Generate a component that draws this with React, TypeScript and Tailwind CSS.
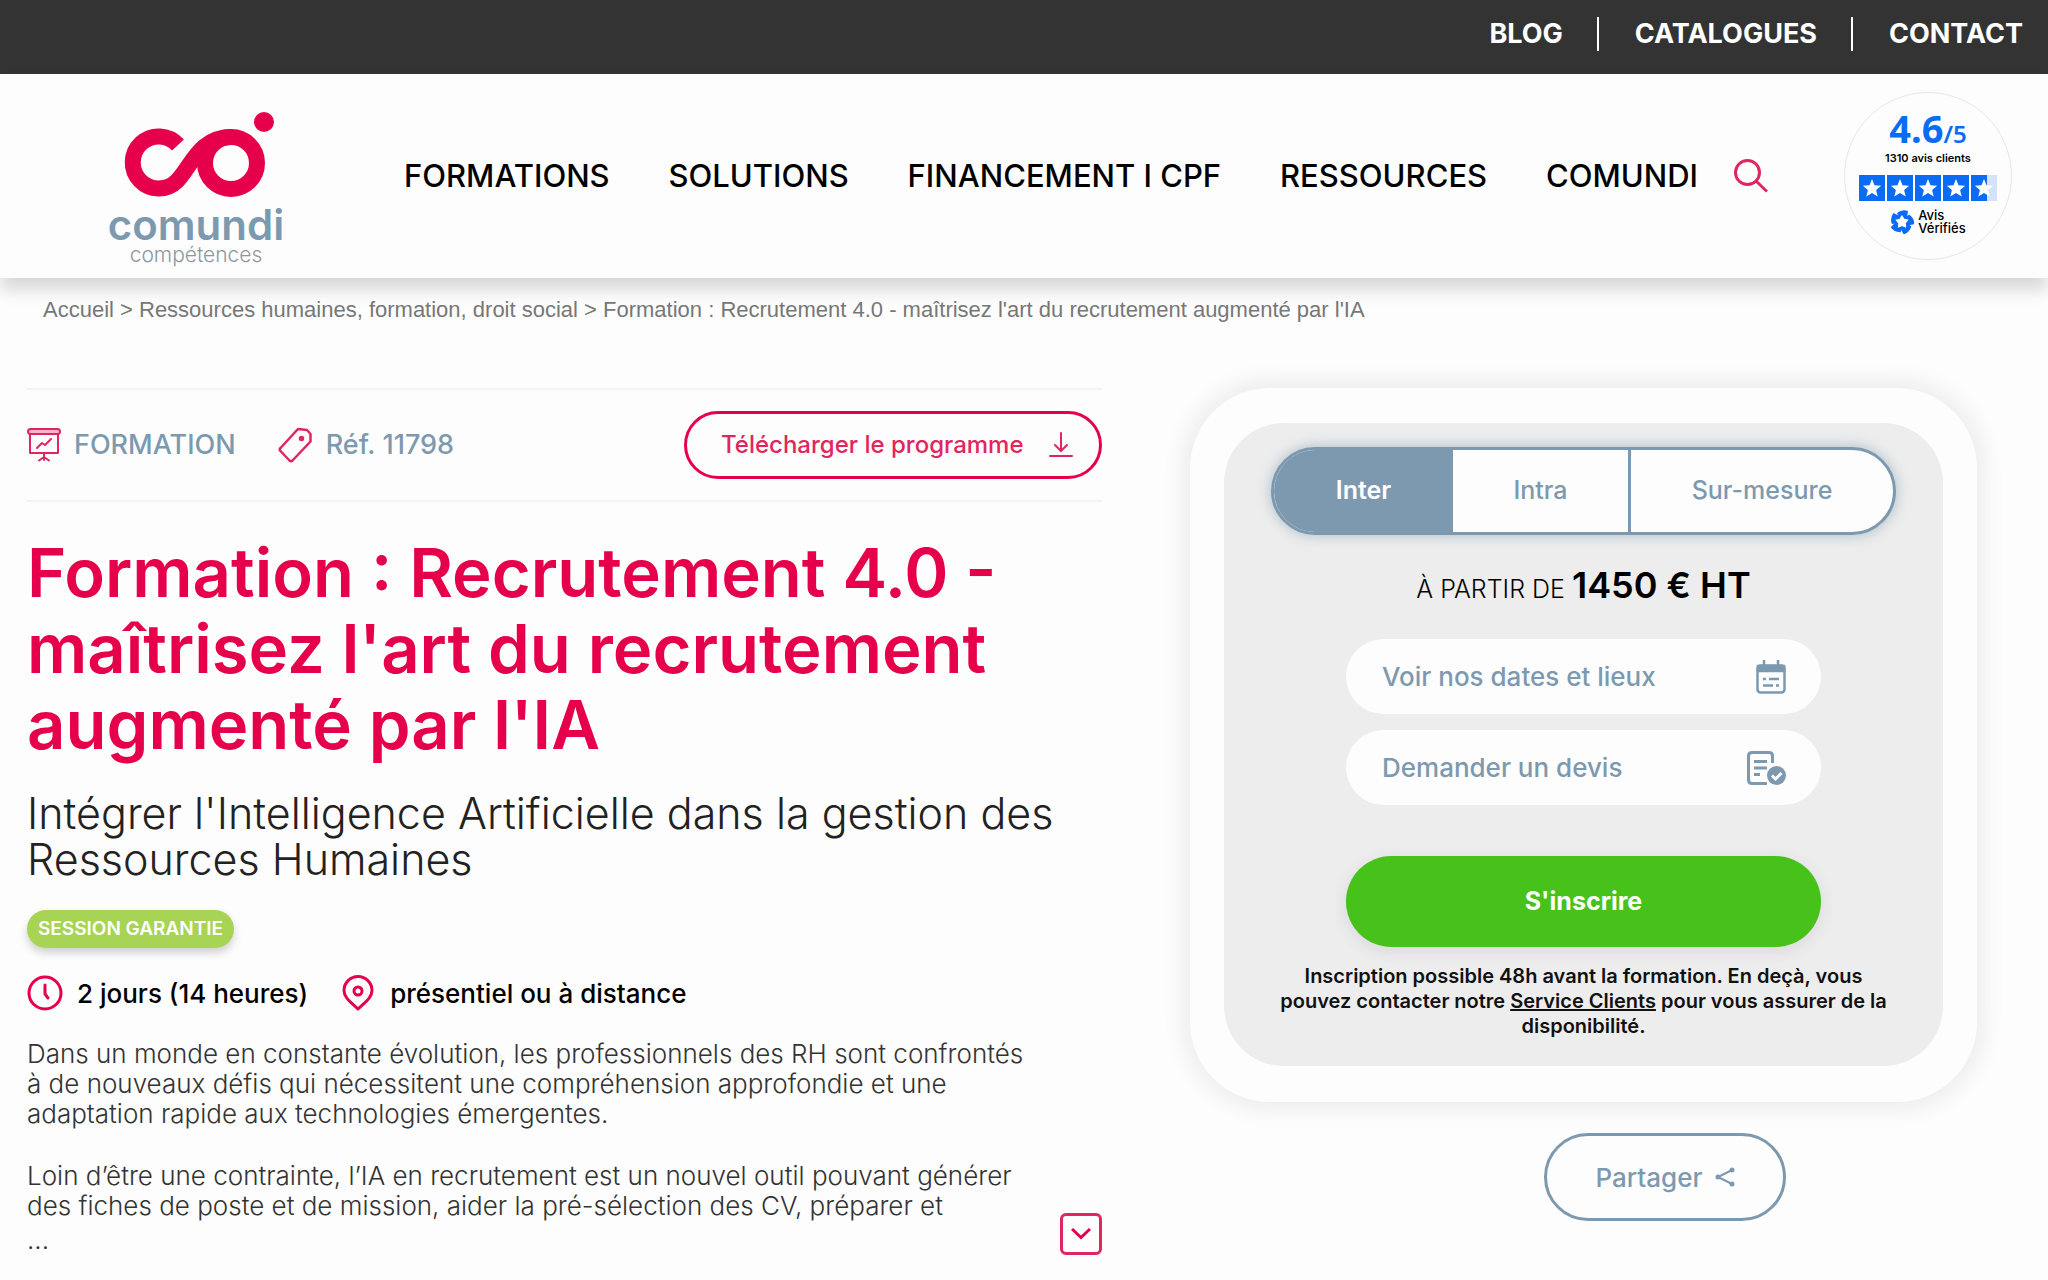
import { useState } from 'react';

const TOP_LINKS = ['BLOG', 'CATALOGUES', 'CONTACT'];
const NAV_LINKS = ['FORMATIONS', 'SOLUTIONS', 'FINANCEMENT I CPF', 'RESSOURCES', 'COMUNDI'];
const MODES = [
  { label: 'Inter', size: 'w-[179px]' },
  { label: 'Intra', size: 'w-[178px] border-r-3 border-[#7d99af]' },
  { label: 'Sur-mesure', size: 'flex-1' },
];

function Logo() {
  return (
    <a href="#" className="flex w-[178px] flex-col items-center pt-4">
      <svg width="158" height="102" viewBox="0 0 158 102" fill="none">
        <g stroke="#e6004c" strokeWidth="16">
          <path d="M61 42A26 26 0 1 0 60 78C74 64 82 34 114 34" />
          <circle cx="114" cy="60" r="26" />
        </g>
        <circle cx="147" cy="19" r="10" fill="#e6004c" />
      </svg>
      <span className="text-[42px] leading-[40px] font-semibold text-[#7d99af]">comundi</span>
      <span className="text-[21px] leading-[20px] font-light text-[#8d979f]">compétences</span>
    </a>
  );
}

function SearchIcon() {
  return (
    <svg width="34" height="34" viewBox="0 0 34 34" fill="none" stroke="#e0265f" strokeWidth="3">
      <circle cx="13.5" cy="13.5" r="12" />
      <path d="M22 22l11 10.5" />
    </svg>
  );
}

function Stars() {
  const star = 'M13 4l2.5 6.2 6.7.5-5.1 4.3 1.6 6.5-5.7-3.5-5.7 3.5 1.6-6.5L3.8 10.7l6.7-.5z';
  return (
    <svg width="138" height="26" viewBox="0 0 138 26">
      {[0, 28, 56, 84, 112].map((x) => (
        <g key={x} transform={`translate(${x} 0)`}>
          <rect width="26" height="26" fill={x === 112 ? '#d3e2fd' : '#0a6cf5'} />
          {x === 112 && <rect width="16" height="26" fill="#0a6cf5" />}
          <path d={star} fill="#fff" />
        </g>
      ))}
    </svg>
  );
}

// Five blades turned around an empty star
function VerifiedIcon() {
  return (
    <svg width="24" height="24" viewBox="0 0 24 24" fill="#0a6cf5">
      {[0, 72, 144, 216, 288].map((a) => (
        <path key={a} d="M7 3Q12 -1 18 1L17 8L14.5 9L12 5L9.5 8.5Z" transform={`rotate(${a} 12 12)`} />
      ))}
    </svg>
  );
}

function Rating() {
  return (
    <a href="#" className="flex size-[168px] flex-col items-center rounded-full border border-gray-200 pt-[14px] text-black">
      <span className="font-['Noto_Sans'] text-[38px] leading-[42px] font-bold text-[#0a6cf5]">
        4.6<span className="text-[24px] leading-none font-semibold">/5</span>
      </span>
      <span className="text-[11px] leading-[18px] font-semibold">1310 avis clients</span>
      <span className="mt-2">
        <Stars />
      </span>
      <span className="mt-2 flex items-center gap-1 text-[13px] leading-[13px] font-medium">
        <VerifiedIcon />
        <span>
          Avis
          <br />
          Vérifiés
        </span>
      </span>
    </a>
  );
}

function BoardIcon() {
  return (
    <svg width="34" height="34" viewBox="0 0 34 34" fill="none" stroke="#e0265f" strokeWidth="2" strokeLinecap="round" strokeLinejoin="round">
      <rect x="1" y="1" width="32" height="5" rx="2.5" fill="#f6b5c9" />
      <path d="M3 6v19h28V6M17 25v7M17 29l-5 3.5M17 29l5 3.5M10 20l5-5 3 2 6-6" />
    </svg>
  );
}

function TagIcon() {
  return (
    <svg width="34" height="36" viewBox="0 0 34 36" fill="none" stroke="#e0265f" strokeWidth="2.5" strokeLinejoin="round">
      <path d="M20 2l9 1 3.5 4v7.5L14.5 33.5q-1.5 1.5-3 0L2.5 24q-1.5-1.5 0-3z" />
      <circle cx="23.5" cy="11.5" r="1.5" fill="#e0265f" />
    </svg>
  );
}

function DownloadIcon() {
  return (
    <svg width="24" height="26" viewBox="0 0 24 26" fill="none" stroke="#e0265f" strokeWidth="2" strokeLinecap="round">
      <path d="M12 1v18M6 13l6 6 6-6M1 24h22" />
    </svg>
  );
}

function ClockIcon() {
  return (
    <svg width="36" height="36" viewBox="0 0 36 36" fill="none" stroke="#e6004c" strokeWidth="3" strokeLinecap="round">
      <circle cx="18" cy="18" r="16" />
      <path d="M18 10v9l3 4" />
    </svg>
  );
}

function PinIcon() {
  return (
    <svg width="32" height="36" viewBox="0 0 32 36" fill="none" stroke="#e6004c" strokeWidth="3" strokeLinejoin="round">
      <path d="M16 34C10 28 2 23 2 15.5a14 14 0 0 1 28 0C30 23 22 28 16 34z" />
      <circle cx="16" cy="16" r="4" />
    </svg>
  );
}

function CalendarIcon() {
  return (
    <svg width="30" height="34" viewBox="0 0 30 34" fill="none" stroke="#7d99af" strokeWidth="2.5">
      <rect x="1.5" y="5.5" width="27" height="27" rx="3" />
      <path d="M2 6h26v5H2z" fill="#7d99af" />
      <path d="M8 0v6M22 0v6M7 19h3M13 19h10M7 25.5h10M20 25.5h3" />
    </svg>
  );
}

function QuoteIcon() {
  return (
    <svg width="39" height="34" viewBox="0 0 39 34" fill="none" stroke="#7d99af" strokeWidth="3">
      <path d="M20 32.5H5q-3.5 0-3.5-3.5V5Q1.5 1.5 5 1.5h17q3.500 0 3.500 3.500v7M7 10.500h13M7 17h13M7 23.500h6" />
      <circle cx="29.5" cy="24.5" r="9.5" fill="#7d99af" stroke="none" />
      <path d="M25 24.5l3.5 3.500 6-6" stroke="#fff" />
    </svg>
  );
}

function ShareIcon() {
  return (
    <svg width="20" height="20" viewBox="0 0 20 20" fill="#7d99af" stroke="#7d99af" strokeWidth="2">
      <path d="M17 3L3 10l14 7" fill="none" />
      <circle cx="3" cy="10" r="1.5" />
      <circle cx="17" cy="3" r="1.5" />
      <circle cx="17" cy="17" r="1.5" />
    </svg>
  );
}

function Header() {
  return (
    <header className="relative">
      <div className="flex h-[74px] items-center justify-end bg-[#333] pr-[25px] pb-[7px] text-[27px] leading-[34px] font-bold text-white">
        {TOP_LINKS.map((label, i) => (
          <a key={label} href="#" className={i > 0 ? 'ml-[34px] border-l-2 border-white pl-9' : ''}>
            {label}
          </a>
        ))}
      </div>
      <div className="flex h-[204px] items-center bg-[#fdfdfd] pr-9 pl-[107px] shadow-[0_12px_16px_rgba(0,0,0,0.15)]">
        <Logo />
        <nav className="ml-[119px] flex flex-1 items-center justify-between text-[31px] font-medium text-black">
          {NAV_LINKS.map((label) => (
            <a key={label} href="#">
              {label}
            </a>
          ))}
        </nav>
        <button type="button" aria-label="Rechercher" className="mr-[76px] ml-9">
          <SearchIcon />
        </button>
        <Rating />
      </div>
    </header>
  );
}

function Presentation() {
  return (
    <section>
      <div className="flex h-[114px] items-center border-y-2 border-[#f3f3f3] text-[27px] font-medium text-[#7d99af]">
        <BoardIcon />
        <span className="ml-[13px]">FORMATION</span>
        <span className="mr-[14px] ml-[42px]">
          <TagIcon />
        </span>
        <span>Réf. 11798</span>
        <a href="#" className="ml-auto flex h-[68px] w-[418px] items-center justify-between rounded-full border-3 border-[#e6004c] pr-[26px] pl-[34px] text-[24px] text-[#e0265f]">
          Télécharger le programme
          <DownloadIcon />
        </a>
      </div>
      <h1 className="mt-[33px] text-[67px] leading-[76px] font-semibold text-[#e6004c]">
        Formation : Recrutement 4.0 -<br />
        maîtrisez l'art du recrutement
        <br />
        augmenté par l'IA
      </h1>
      <h2 className="mt-[27px] text-[43px] leading-[46px] font-light text-[#222]">
        Intégrer l'Intelligence Artificielle dans la gestion des
        <br />
        Ressources Humaines
      </h2>
      <p className="mt-7 flex h-[38px] w-[207px] items-center justify-center rounded-full bg-[#a8d455] text-[19px] font-semibold text-white shadow-[0_5px_8px_rgba(0,0,0,0.18)]">
        SESSION GARANTIE
      </p>
      <div className="mt-[27px] flex h-9 items-center text-[26px] font-medium text-black">
        <ClockIcon />
        <span className="mr-[34px] ml-[14px]">2 jours (14 heures)</span>
        <PinIcon />
        <span className="ml-4">présentiel ou à distance</span>
      </div>
      <div className="mt-7 flex items-end justify-between text-[26px] leading-[30px] font-light text-[#333]">
        <div>
          <p>
            Dans un monde en constante évolution, les professionnels des RH sont confrontés
            <br />
            à de nouveaux défis qui nécessitent une compréhension approfondie et une
            <br />
            adaptation rapide aux technologies émergentes.
          </p>
          <p className="mt-8">
            Loin d’être une contrainte, l’IA en recrutement est un nouvel outil pouvant générer
            <br />
            des fiches de poste et de mission, aider la pré-sélection des CV, préparer et
          </p>
          <p className="mt-1">...</p>
        </div>
        <button type="button" aria-label="Lire la suite" className="flex size-[42px] shrink-0 items-center justify-center rounded-md border-3 border-[#e0265f]">
          <svg width="20" height="12" viewBox="0 0 20 12" fill="none" stroke="#e6004c" strokeWidth="3">
            <path d="M1 1l9 8.500L19 1" />
          </svg>
        </button>
      </div>
    </section>
  );
}

function Booking() {
  const [mode, setMode] = useState('Inter');
  const pill = 'flex h-[75px] w-full items-center justify-between rounded-full bg-[#fdfdfd] pr-[35px] pl-9 text-[26px] font-medium text-[#7d99af]';

  return (
    <aside className="flex flex-col items-center">
      <div className="w-full rounded-[80px] bg-[#fdfdfd] px-[34px] pt-[35px] pb-9 shadow-[0_0_20px_10px_rgba(0,0,0,0.06)]">
        <div className="flex flex-col items-center rounded-[60px] bg-[#ededed] px-[47px] pt-6 pb-[27px]">
          <div className="flex h-[88px] w-full overflow-hidden rounded-full border-3 border-[#7d99af] bg-[#fdfdfd] text-[25px] shadow-[0_0_14px_rgba(125,153,175,0.6)]">
            {MODES.map(({ label, size }) => (
              <button
                key={label}
                type="button"
                onClick={() => setMode(label)}
                className={`${size} ${mode === label ? 'bg-[#7d99af] font-semibold text-white' : 'font-medium text-[#7d99af]'}`}
              >
                {label}
              </button>
            ))}
          </div>
          <p className="mt-[26px] text-[25px] leading-[48px] text-black">
            <span className="font-light">À PARTIR DE</span> <strong className="text-[36px] font-semibold">1450 € HT</strong>
          </p>
          <div className="mt-[26px] flex w-full max-w-[475px] flex-col gap-4">
            <button type="button" className={pill}>
              Voir nos dates et lieux
              <CalendarIcon />
            </button>
            <button type="button" className={pill}>
              Demander un devis
              <QuoteIcon />
            </button>
            <button type="button" className="mt-[35px] h-[91px] rounded-full bg-[#47c21a] text-[25px] font-bold text-white shadow-[0_4px_16px_rgba(90,60,120,0.12)]">
              S'inscrire
            </button>
          </div>
          <p className="mt-[17px] text-center text-[20px] leading-[25px] font-semibold text-[#111]">
            Inscription possible 48h avant la formation. En deçà, vous
            <br />
            pouvez contacter notre{' '}
            <a href="#" className="underline">
              Service Clients
            </a>{' '}
            pour vous assurer de la
            <br />
            disponibilité.
          </p>
        </div>
      </div>
      <button type="button" className="mt-[31px] ml-[163px] flex h-[88px] w-[242px] items-center justify-center gap-3 rounded-full border-3 border-[#7d99af] text-[26px] font-medium text-[#7d99af]">
        Partager
        <ShareIcon />
      </button>
    </aside>
  );
}

export default function App() {
  return (
    <div className="min-h-screen bg-[#fdfdfd] font-['Inter','Liberation_Sans',sans-serif]">
      <Header />
      <nav aria-label="Fil d'Ariane" className="relative mt-4 pl-[43px] font-['Liberation_Sans',sans-serif] text-[22px] leading-8 text-[#777]">
        <a href="#">Accueil</a> &gt; <a href="#">Ressources humaines, formation, droit social</a> &gt; Formation : Recrutement 4.0 - maîtrisez l'art
        du recrutement augmenté par l'IA
      </nav>
      <main className="mt-[62px] grid grid-cols-[1075fr_787fr] gap-[88px] pr-[71px] pl-[27px]">
        <Presentation />
        <Booking />
      </main>
    </div>
  );
}
